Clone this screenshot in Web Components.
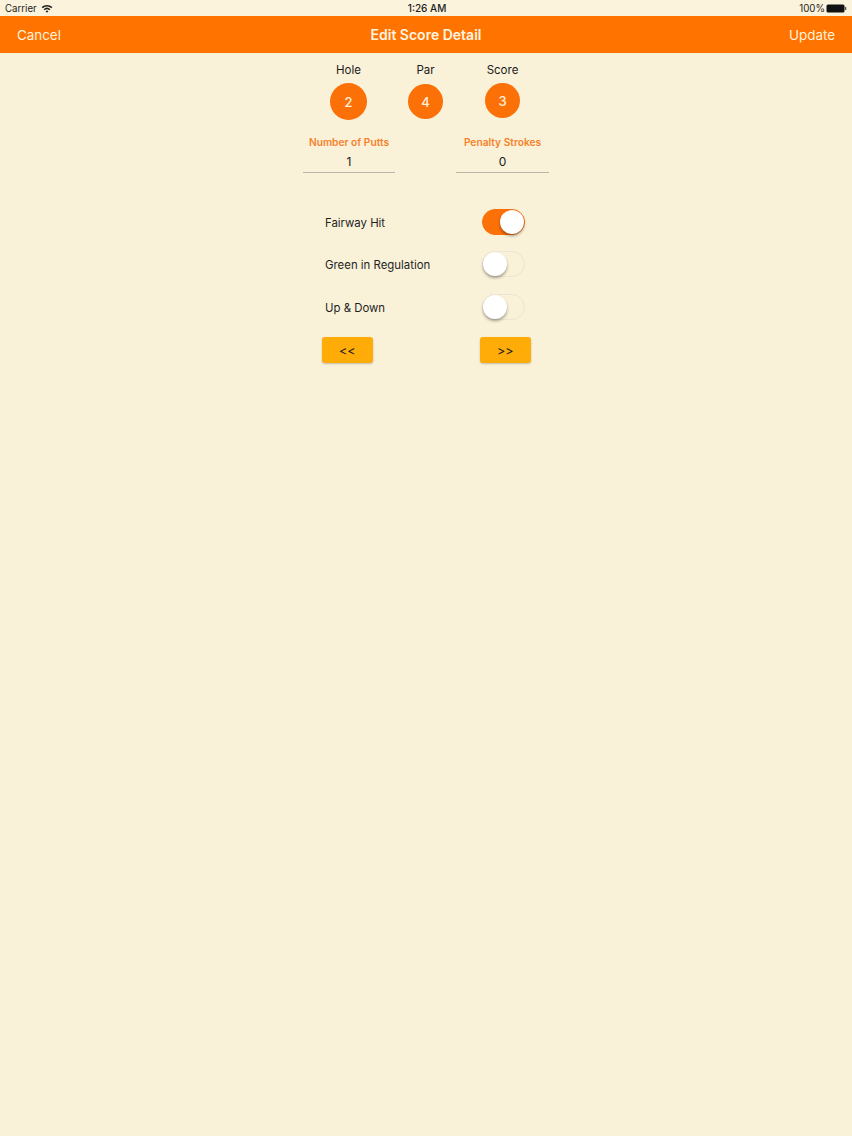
<!DOCTYPE html>
<html lang="en"><head><meta charset="utf-8"><title>Edit Score Detail</title>
<style>
html,body{margin:0;padding:0;height:100%}
body{background:#faf1d9;font-family:Inter,"Liberation Sans",sans-serif;color:#111}
</style></head><body>
<score-app></score-app>
<script>
function def(name, html){
  customElements.define(name, class extends HTMLElement{
    constructor(){super();this.attachShadow({mode:'open'}).innerHTML=html(this);}
  });
}
def('status-bar',()=>`<style>
:host{display:grid;grid-template-columns:1fr auto 1fr;align-items:center;height:16px;padding:0 5px;background:#fbf3dc;font-size:9.7px;color:#222}
.l,.r{display:flex;align-items:center;gap:4px}.r{justify-content:flex-end;gap:1px}
.t{font-weight:500;font-size:10px;padding-left:2px}
svg{display:block}
</style>
<div class="l"><span>Carrier</span><svg width="12" height="9" viewBox="0 0 12 9"><path d="M.6 3.1A7.8 7.8 0 0 1 11.4 3.1L10.3 4.3A6.2 6.2 0 0 0 1.7 4.3ZM2.6 5.2A5 5 0 0 1 9.4 5.2L8.3 6.3A3.4 3.4 0 0 0 3.7 6.3ZM4.6 7.2A2.1 2.1 0 0 1 7.4 7.2L6 8.7Z" fill="#222"/></svg></div>
<div class="t">1:26 AM</div>
<div class="r"><span>100%</span><svg width="21" height="9" viewBox="1 0 21 9"><rect x="1.5" y="0.5" width="18" height="8" rx="1.5" fill="#111"/><path d="M20.3 3h.9v3h-.9z" fill="#111"/></svg></div>`);
def('nav-bar',()=>`<style>
:host{display:flex;justify-content:space-between;align-items:center;position:relative;height:37px;padding:0 17px;background:#ff7300;color:#fff3dc;font-size:13.4px}
.title{position:absolute;left:0;right:0;text-align:center;font-weight:600;font-size:14px;color:#fff5e0;pointer-events:none}
</style><span>Cancel</span><span class="title">Edit Score Detail</span><span>Update</span>`);
def('stat-badge',(e)=>`<style>
:host{display:flex;flex-direction:column;align-items:center;font-size:11.5px;color:#1a1a1a}
.c{width:var(--d,35px);height:var(--d,35px);border-radius:50%;background:#fc7008;color:#fff1dc;display:flex;align-items:center;justify-content:center;font-size:13px;font-weight:500;margin-top:var(--m,5px)}
.l{line-height:15px}
</style><div class="l"><slot name="label"></slot></div><div class="c"><slot></slot></div>`);
def('score-field',()=>`<style>
:host{display:flex;flex-direction:column;align-items:center;border-bottom:1px solid #b9b5a8;height:38px;box-sizing:border-box}
.l{font-size:10.2px;font-weight:600;color:#f5822a;line-height:14px;white-space:nowrap}
.v{font-size:12px;line-height:14px;margin-top:6px;color:#1a1a1a}
</style><div class="l"><slot name="label"></slot></div><div class="v"><slot></slot></div>`);
def('toggle-row',(e)=>`<style>
:host{display:flex;justify-content:space-between;align-items:center;height:27px;font-size:11.4px;color:#1f1f1f}
.s{width:43px;height:26px;box-sizing:border-box;border-radius:13px;border:1px solid #ece5d1;position:relative;background:transparent;margin-bottom:2px}
:host([on]) .s{background:#fc7008;border-color:#fc7008}
.k{position:absolute;top:0;left:0;width:24px;height:24px;border-radius:50%;background:#fff;box-shadow:0 2px 3px rgba(0,0,0,.35)}
:host([on]) .k{left:17px}
</style><span><slot></slot></span><div class="s"><div class="k"></div></div>`);
def('step-button',()=>`<style>
:host{display:flex;align-items:center;justify-content:center;width:50.5px;height:26px;border-radius:3px;background:#ffab08;color:#1a1a1a;font-size:12.5px;box-shadow:0 1px 2px rgba(0,0,0,.22)}
</style><slot></slot>`);
def('score-form',()=>`<style>
:host{display:block;width:246px;margin:0 auto;padding-top:10px}
.stats{display:grid;grid-template-columns:92px 61px 93px;justify-items:center}
.stats stat-badge:first-child{margin-left:-1px}
.fields{display:flex;justify-content:space-between;margin-top:15px}
.fields score-field{width:92px}.fields score-field+score-field{width:93px}
.toggles{display:flex;flex-direction:column;gap:16px;margin:36.5px 24px 0 22px}
.toggles toggle-row:nth-child(2){margin-top:-1px}
.btns{display:flex;justify-content:space-between;margin:15.5px 18.5px 0 19px}
</style>
<div class="stats">
<stat-badge style="--d:37px"><span slot="label">Hole</span>2</stat-badge>
<stat-badge style="--m:6px"><span slot="label">Par</span>4</stat-badge>
<stat-badge><span slot="label">Score</span>3</stat-badge>
</div>
<div class="fields">
<score-field><span slot="label">Number of Putts</span>1</score-field>
<score-field><span slot="label">Penalty Strokes</span>0</score-field>
</div>
<div class="toggles">
<toggle-row on>Fairway Hit</toggle-row>
<toggle-row>Green in Regulation</toggle-row>
<toggle-row>Up &amp; Down</toggle-row>
</div>
<div class="btns"><step-button>&lt;&lt;</step-button><step-button>&gt;&gt;</step-button></div>`);
def('score-app',()=>`<style>:host{display:block}</style><status-bar></status-bar><nav-bar></nav-bar><score-form></score-form>`);
</script>
</body></html>
